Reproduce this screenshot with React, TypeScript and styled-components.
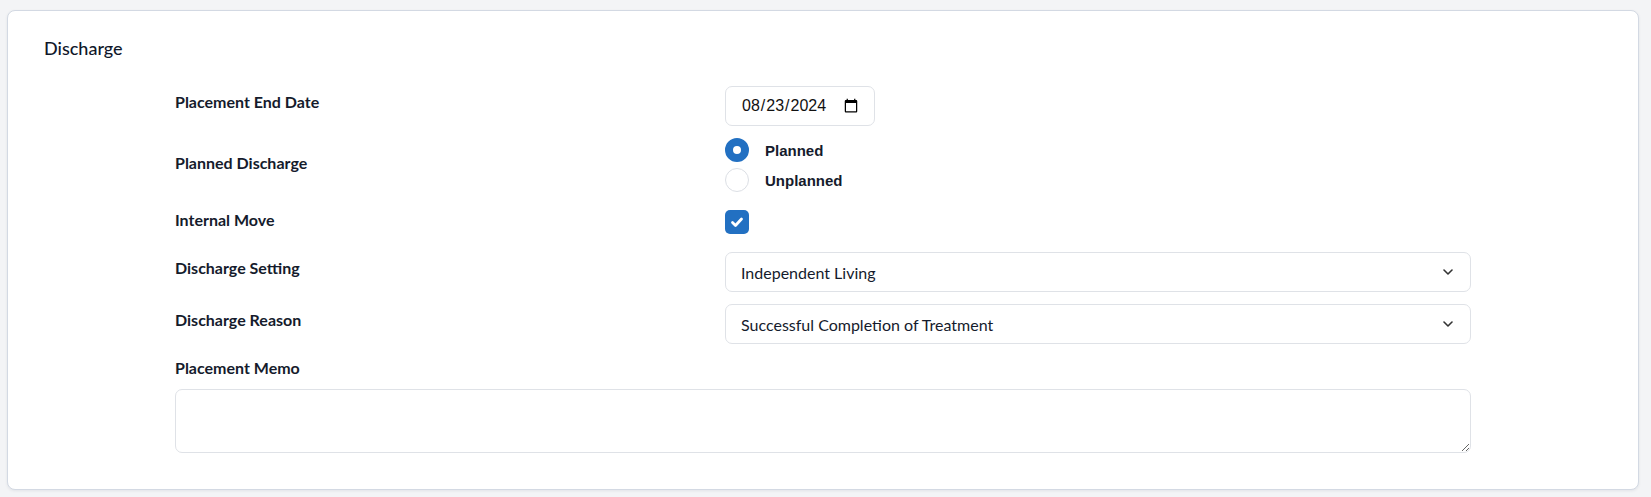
import React from "react";
import styled, { createGlobalStyle } from "styled-components";

const GlobalStyle = createGlobalStyle`
  html, body {
    margin: 0;
    padding: 0;
    background: #f3f4f6;
  }
  body {
    font-family: Lato, "Liberation Sans", sans-serif;
    color: #151b2c;
  }
`;

const Page = styled.div`
  padding: 10px 12px 7px 7px;
  background: #f3f4f6;
`;

const Card = styled.section`
  background: #ffffff;
  border: 1px solid #d3d9e3;
  border-radius: 8px;
  box-shadow: 0 1px 3px rgba(30, 41, 59, 0.08);
  padding: 23px 36px 36px;
`;

const Title = styled.h2`
  margin: 0 0 24px;
  font-family: Lato, sans-serif;
  font-size: 18px;
  font-weight: 500;
  line-height: 28px;
  color: #10172a;
`;

const Form = styled.div`
  width: 1296px;
  margin: 0 auto;
  display: flex;
  flex-direction: column;
  gap: 12px;
`;

const Row = styled.div`
  display: grid;
  grid-template-columns: 550px 1fr;
  align-items: center;
`;

const StackRow = styled.div`
  display: flex;
  flex-direction: column;
`;

const Label = styled.label<{ $raised?: boolean }>`
  font-family: Lato, sans-serif;
  font-size: 16px;
  font-weight: 700;
  line-height: 24px;
  color: #151b2c;
  margin-bottom: ${(p) => (p.$raised ? "8px" : "4px")};
`;

const MemoLabel = styled(Label)`
  margin-bottom: 9px;
`;

const DateInput = styled.input`
  box-sizing: border-box;
  width: 150px;
  height: 40px;
  padding: 0 13px 0 15px;
  border: 1px solid #dfe2e7;
  border-radius: 7px;
  font-family: "Liberation Sans", Arial, sans-serif;
  font-size: 16px;
  color: #111;
  background: #fff;
  outline: none;
`;

const RadioGroup = styled.div`
  display: flex;
  flex-direction: column;
  gap: 6px;
`;

const RadioItem = styled.label`
  display: flex;
  align-items: center;
  gap: 16px;
  font-family: "Liberation Sans", Arial, sans-serif;
  font-size: 15px;
  font-weight: 700;
  color: #151b2c;
`;

const RadioCircle = styled.span<{ $checked?: boolean }>`
  box-sizing: border-box;
  width: 24px;
  height: 24px;
  border-radius: 50%;
  background: #fff;
  border: ${(p) => (p.$checked ? "8px solid #2270c2" : "1px solid #dcdfe5")};
`;

const CheckBox = styled.span`
  display: flex;
  align-items: center;
  justify-content: center;
  width: 24px;
  height: 24px;
  border-radius: 5px;
  background: #2270c2;
`;

const CheckCell = styled.div`
  display: flex;
  align-items: center;
  height: 36px;
`;

const SelectWrap = styled.div`
  position: relative;
`;

const Select = styled.select`
  box-sizing: border-box;
  width: 100%;
  height: 40px;
  padding: 0 40px 0 15px;
  border: 1px solid #dfe2e7;
  border-radius: 7px;
  background: #fff;
  font-family: Lato, sans-serif;
  font-size: 16px;
  color: #151b2c;
  appearance: none;
  -webkit-appearance: none;
  outline: none;
`;

const Chevron = styled.svg`
  position: absolute;
  right: 18px;
  top: 50%;
  margin-top: -3px;
  pointer-events: none;
`;

const Memo = styled.textarea`
  box-sizing: border-box;
  display: block;
  width: 100%;
  height: 64px;
  border: 1px solid #dfe2e7;
  border-radius: 7px;
  background: #fff;
  font-family: Lato, sans-serif;
  font-size: 16px;
  padding: 8px 15px;
  outline: none;
`;

function ChevronDown() {
  return (
    <Chevron width="10" height="6" viewBox="0 0 10 6">
      <path d="M1 1l4 4 4-4" fill="none" stroke="#333" strokeWidth="1.6" strokeLinecap="round" strokeLinejoin="round" />
    </Chevron>
  );
}

export default function App() {
  return (
    <>
      <GlobalStyle />
      <Page>
        <Card>
          <Title>Discharge</Title>
          <Form>
            <Row>
              <Label $raised>Placement End Date</Label>
              <div>
                <DateInput type="date" defaultValue="2024-08-23" />
              </div>
            </Row>
            <Row>
              <Label>Planned Discharge</Label>
              <RadioGroup>
                <RadioItem>
                  <RadioCircle $checked />
                  Planned
                </RadioItem>
                <RadioItem>
                  <RadioCircle />
                  Unplanned
                </RadioItem>
              </RadioGroup>
            </Row>
            <Row>
              <Label>Internal Move</Label>
              <CheckCell>
                <CheckBox>
                  <svg width="14" height="12" viewBox="0 0 14 12">
                    <path d="M2.5 6.5l3 3L11.5 3" fill="none" stroke="#fff" strokeWidth="2.8" strokeLinecap="round" strokeLinejoin="round" />
                  </svg>
                </CheckBox>
              </CheckCell>
            </Row>
            <Row>
              <Label $raised>Discharge Setting</Label>
              <SelectWrap>
                <Select defaultValue="independent">
                  <option value="independent">Independent Living</option>
                </Select>
                <ChevronDown />
              </SelectWrap>
            </Row>
            <Row>
              <Label $raised>Discharge Reason</Label>
              <SelectWrap>
                <Select defaultValue="success">
                  <option value="success">Successful Completion of Treatment</option>
                </Select>
                <ChevronDown />
              </SelectWrap>
            </Row>
            <StackRow>
              <MemoLabel>Placement Memo</MemoLabel>
              <Memo />
            </StackRow>
          </Form>
        </Card>
      </Page>
    </>
  );
}
